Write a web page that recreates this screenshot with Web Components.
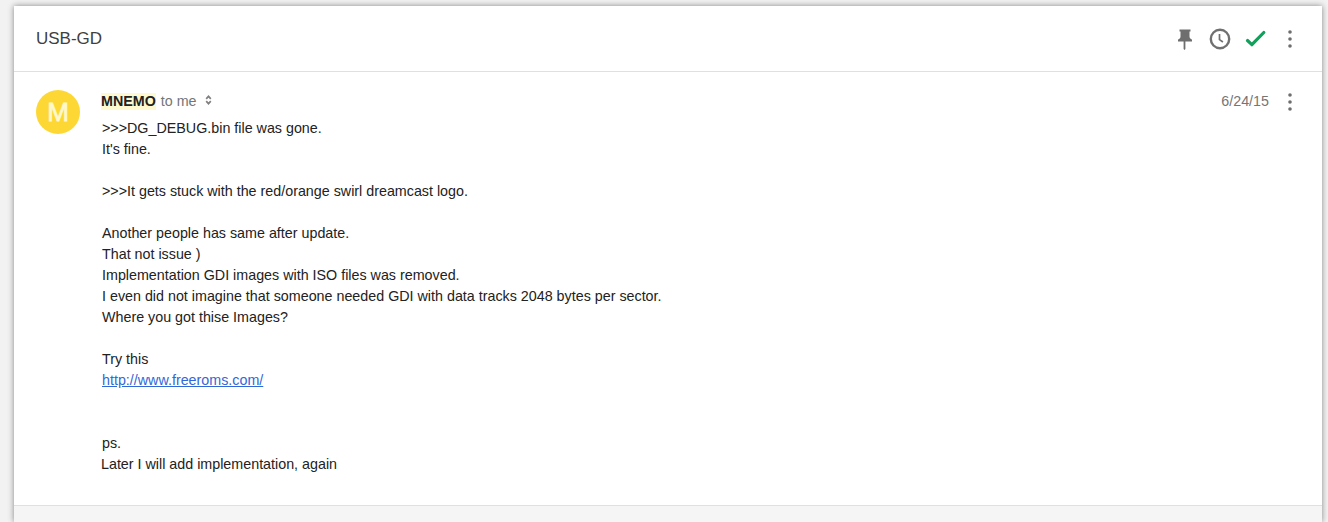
<!DOCTYPE html>
<html>
<head>
<meta charset="utf-8">
<title>USB-GD</title>
<style>
  html, body { margin: 0; height: 100%; overflow: hidden; background: #f2f2f2; }
  body { font-family: "Liberation Sans", Arial, sans-serif; color: #222; padding: 6px 6px 0 14px; box-sizing: border-box; }
</style>
</head>
<body>
<inbox-thread subject="USB-GD">
  <inbox-message sender="MNEMO" date="6/24/15">
    <div>&gt;&gt;&gt;DG_DEBUG.bin file was gone.</div>
    <div>It's fine.</div>
    <br>
    <div>&gt;&gt;&gt;It gets stuck with the red/orange swirl dreamcast logo.</div>
    <br>
    <div>Another people has same after update.</div>
    <div>That not issue )</div>
    <div>Implementation GDI images with ISO files was removed.</div>
    <div>I even did not imagine that someone needed GDI with data tracks 2048 bytes per sector.</div>
    <div>Where you got thise Images?</div>
    <br>
    <div>Try this</div>
    <div><a href="#" style="color:#3367d6">http://www.freeroms.com/</a></div>
    <br>
    <br>
    <div>ps.</div>
    <div style="margin-left:-1px">Later I will add implementation, again</div>
  </inbox-message>
</inbox-thread>

<script>
// all drawn on a 24x24 box
const ICONS = {
  pin: '<path d="M16.5 9.5V4.5h1V2.5h-11v2h1v5c0 1.66-1.5 2.8-2.5 3v2h5.6v7.5l.9.9.9-.9V14.500H19v-2c-1-.2-2.500-1.340-2.500-3z"/>',
  clock: '<circle cx="12" cy="12" r="9.200" fill="none" stroke="#707070" stroke-width="2.400"/><path d="M11.500 7v5.600l3.400 2.400" fill="none" stroke="#707070" stroke-width="1.700"/>',
  check: '<path d="M4.500 13.500 8.900 17.700 20.800 5.500" fill="none" stroke="#12a05c" stroke-width="3.200" stroke-linecap="round" stroke-linejoin="round"/>',
  more: '<circle cx="12" cy="5" r="1.800"/><circle cx="12" cy="12" r="1.800"/><circle cx="12" cy="19" r="1.800"/>',
};

class IconButton extends HTMLElement {
  connectedCallback() {
    const name = this.getAttribute("name");
    this.attachShadow({ mode: "open" }).innerHTML = `
      <style>
        :host { display: block; width: 24px; height: 24px; }
        svg { display: block; width: 24px; height: 24px; fill: #6e6e6e; }
      </style>
      <svg viewBox="0 0 24 24">${ICONS[name]}</svg>
    `;
  }
}

class InboxThread extends HTMLElement {
  connectedCallback() {
    this.attachShadow({ mode: "open" }).innerHTML = `
      <style>
        :host {
          display: flex;
          flex-direction: column;
          height: 516px;
          background: #fff;
          box-shadow: 0 0 6px rgba(0, 0, 0, 0.45);
        }
        header {
          flex: none;
          height: 66px;
          box-sizing: border-box;
          border-bottom: 1px solid #e0e0e0;
          display: flex;
          align-items: center;
          padding: 0 20px 0 22px;
        }
        h1 {
          flex: 1;
          margin: 0;
          padding-top: 1px;
          font-size: 17px;
          font-weight: 400;
          color: #404040;
        }
        .actions { display: flex; gap: 11px; }
        main { flex: 1; min-height: 0; }
        footer {
          flex: none;
          height: 17px;
          box-sizing: border-box;
          background: #f5f5f5;
          border-top: 1px solid #e0e0e0;
        }
      </style>
      <header>
        <h1>${this.getAttribute("subject")}</h1>
        <div class="actions">
          <icon-button name="pin"></icon-button>
          <icon-button name="clock"></icon-button>
          <icon-button name="check"></icon-button>
          <icon-button name="more"></icon-button>
        </div>
      </header>
      <main><slot></slot></main>
      <footer></footer>
    `;
  }
}

class InboxMessage extends HTMLElement {
  connectedCallback() {
    const sender = this.getAttribute("sender");
    this.attachShadow({ mode: "open" }).innerHTML = `
      <style>
        :host {
          display: flex;
          padding: 18px 20px 0 22px;
          font-size: 14.31px;
          line-height: 21px;
          color: #222;
        }
        .avatar {
          flex: none;
          width: 44px;
          height: 44px;
          border-radius: 50%;
          background: #fdd835;
          color: #fff8cc;
          font-size: 26px;
          -webkit-text-stroke: 0.8px #fff8cc;
          line-height: 44px;
          text-align: center;
          margin-right: 22px;
        }
        .content { flex: 1; min-width: 0; }
        .meta { display: flex; align-items: center; height: 21px; margin-top: 1px; margin-bottom: 6px; color: #757575; }
        .name {
          font-weight: 700;
          color: #212121;
          background: #fff9d0;
          line-height: 17px;
          margin-left: -1px;
        }
        .to { margin-left: 5px; }
        .chevron { display: block; margin-left: 8px; margin-top: -3px; }
        .date { margin-left: auto; margin-right: 9px; }
      </style>
      <div class="avatar">${sender[0]}</div>
      <div class="content">
        <div class="meta">
          <span class="name">${sender}</span>
          <span class="to">to me</span>
          <svg class="chevron" width="7" height="10" viewBox="0 0 7 10" fill="none" stroke="#808080" stroke-width="1.700">
            <path d="M1.200 3.800 3.500 1.300 5.800 3.800M1.200 6.200 3.500 8.700 5.800 6.200"/>
          </svg>
          <span class="date">${this.getAttribute("date")}</span>
          <icon-button name="more"></icon-button>
        </div>
        <div class="body"><slot></slot></div>
      </div>
    `;
  }
}

customElements.define("icon-button", IconButton);
customElements.define("inbox-thread", InboxThread);
customElements.define("inbox-message", InboxMessage);
</script>
</body>
</html>
